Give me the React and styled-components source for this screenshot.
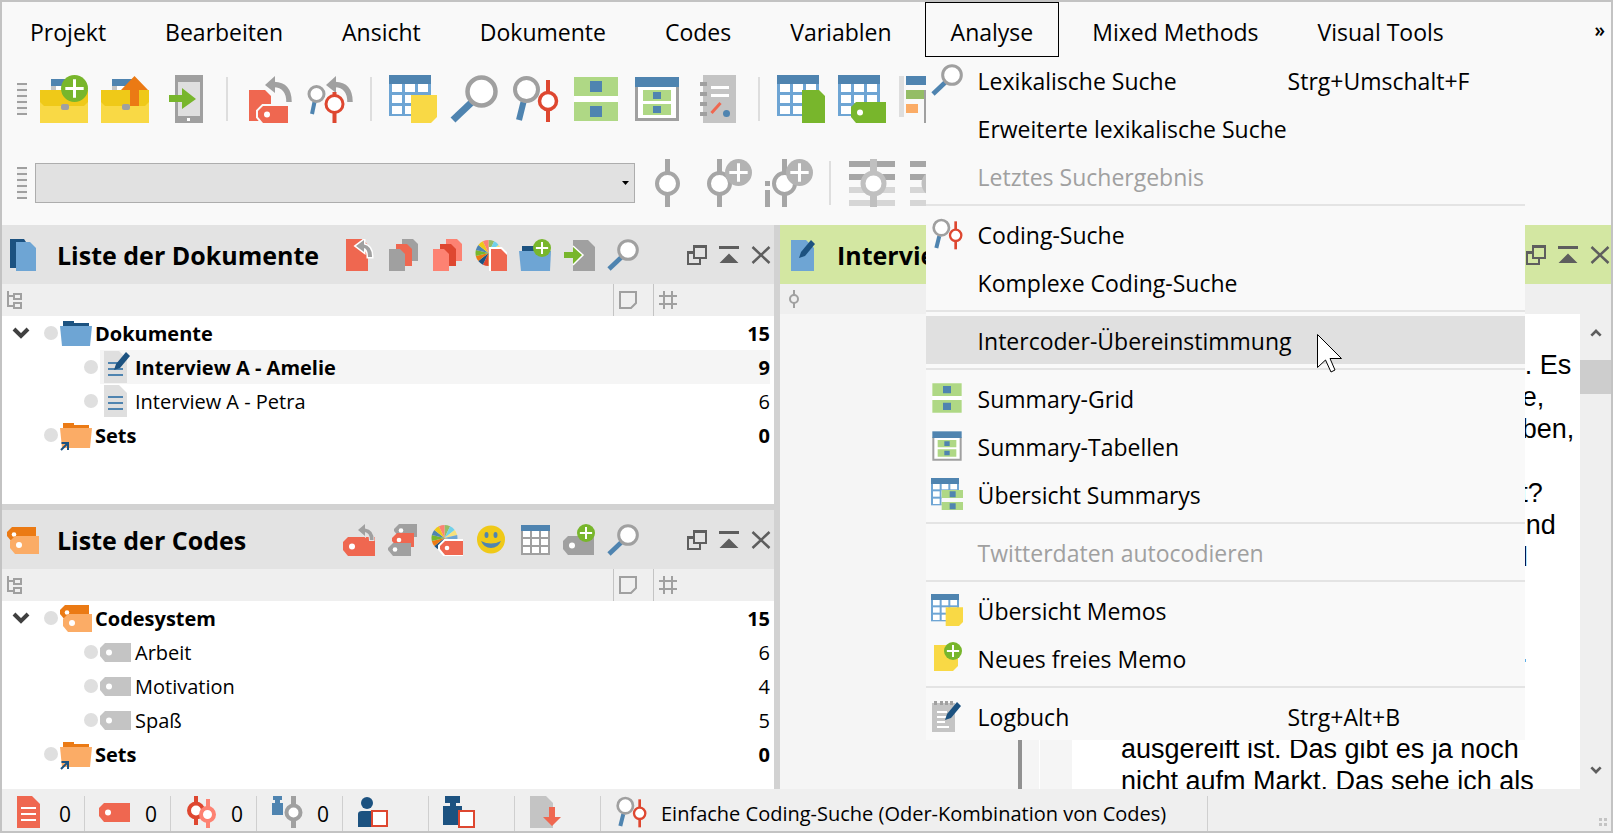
import React from 'react'
import styled, { createGlobalStyle } from 'styled-components'

const c = {
  blue: '#4f84b0',
  lightBlue: '#6ea5d4',
  navy: '#1c5280',
  yellow: '#f9d945',
  darkYellow: '#efc918',
  green: '#78b62c',
  lightGreen: '#afd885',
  orange: '#eb7a14',
  lightOrange: '#fbac66',
  red: '#ef6750',
  darkRed: '#de4730',
  salmon: '#fd8272',
  gray: '#a0a0a0',
  lightGray: '#c4c4c4',
};

const GlobalStyle = createGlobalStyle`
  * { box-sizing: border-box; }
  body {
    margin: 0;
    font-family: "Open Sans", "Noto Sans", sans-serif;
    color: #000;
  }
  button, select { font: inherit; color: inherit; }
`;

/* ---------- layout ---------- */

const Window = styled.div`
  display: flex;
  flex-direction: column;
  height: 100vh;
  border: 2px solid #c3c3c3;
  background-color: #f9f9f9;
  overflow: hidden;
`;

const MenuBar = styled.nav`
  flex: none;
  display: flex;
  gap: 7px;
  height: 55px;
  padding-left: 2px;
`;

const MenuEntry = styled.div`
  position: relative;
`;

const MenuButton = styled.button`
  position: relative;
  z-index: 3;
  height: 55px;
  padding: 4px 25px 0;
  border: 1px solid ${(p) => (p.$open ? '#000' : 'transparent')};
  background-color: #f9f9f9;
  font-size: 23px;
  line-height: 32px;
  white-space: nowrap;
`;

const MoreButton = styled.button`
  margin-left: auto;
  padding: 0 6px;
  border: none;
  background: none;
  font-size: 19px;
  font-weight: 600;
`;

const Dropdown = styled.div`
  position: absolute;
  z-index: 2;
  top: 54px;
  left: 1px;
  width: 599px;
  background-color: #f9f9f9;
`;

const DropdownItem = styled.button`
  position: relative;
  display: grid;
  grid-template-columns: 32px 1fr 237px;
  column-gap: 15px;
  align-items: center;
  width: 100%;
  height: 48px;
  padding: 0 0 0 5px;
  border: none;
  background-color: ${(p) => (p.$active ? '#e0e0e0' : 'transparent')};
  color: ${(p) => (p.disabled ? '#a0a0a0' : '#000')};
  font-size: 23px;
  line-height: 32px;
  text-align: left;
  white-space: nowrap;
`;

const ItemText = styled.span`
  padding-top: 2px;
`;

const Divider = styled.hr`
  height: 2px;
  margin: 4px 0;
  border: none;
  background-color: #e4e4e4;
`;

const Pointer = styled.svg`
  position: absolute;
  top: 18px;
  left: 391px;
  width: 26px;
  height: 39px;
`;

const Toolbar = styled.div`
  flex: none;
  display: flex;
  align-items: center;
  gap: 13px;
  padding: 18px 0 18px 15px;
  overflow: hidden;
`;

const Grip = styled.div`
  flex: none;
  width: 10px;
  height: 32px;
  background: repeating-linear-gradient(#a0a0a0 0 2px, #f1f1f1 2px 6px);
`;

const ToolSeparator = styled.div`
  flex: none;
  width: 2px;
  height: 44px;
  margin: 0 4px 0 3px;
  background-color: #dedede;
`;

const IconButton = styled.button`
  flex: none;
  display: block;
  padding: 0;
  border: none;
  background: none;
  line-height: 0;
`;

const ComboBox = styled.div`
  flex: none;
  display: grid;
  align-items: center;
  width: 600px;
  margin: 0 -5px 0 -5px;

  > * { grid-area: 1 / 1; }
  > svg { justify-self: end; margin-right: 6px; pointer-events: none; }
`;

const Select = styled.select`
  appearance: none;
  width: 100%;
  height: 40px;
  border: 1px solid #adadad;
  border-radius: 0;
  background-color: #e1e1e1;
`;

const Workspace = styled.main`
  flex: 1;
  display: flex;
  gap: 6px;
  min-height: 0;
  background-color: #d2d2d2;
`;

const Column = styled.div`
  flex: 772;
  display: flex;
  flex-direction: column;
  gap: 6px;
  min-width: 0;
`;

const Panel = styled.section`
  flex: ${(p) => p.$grow || 1};
  display: flex;
  flex-direction: column;
  min-width: 0;
  min-height: 0;
  background-color: ${(p) => (p.$document ? '#f5f5f5' : '#fff')};
`;

const PanelHeader = styled.header`
  flex: none;
  display: flex;
  align-items: center;
  height: 59px;
  padding: 0 ${(p) => (p.$active ? 1 : 3)}px 0 ${(p) => (p.$active ? 7 : 5)}px;
  background-color: ${(p) => (p.$active ? '#d3e7a2' : '#e3e3e3')};
`;

const PanelTitle = styled.h2`
  flex: 0 0 286px;
  margin: 0 0 0 18px;
  padding-top: 1px;
  font-size: 25px;
  font-weight: 700;
  line-height: 36px;
  white-space: nowrap;
`;

const PanelTools = styled.div`
  display: flex;
  gap: 12px;
`;

const WindowButtons = styled.div`
  display: flex;
  gap: 12px;
  margin-left: auto;
`;

const TreeTable = styled.table`
  width: 100%;
  table-layout: fixed;
  border-spacing: 0;
`;

const HeadCell = styled.th`
  width: ${(p) => (p.$width ? `${p.$width}px` : 'auto')};
  height: 32px;
  padding: 0 5px;
  border-left: ${(p) => (p.$width ? '1px solid #c4c4c4' : 'none')};
  background-color: #efefef;
  text-align: left;
  line-height: 0;
`;

const TreeRow = styled.tr`
  height: 34px;
  font-size: 20px;
  line-height: 32px;
  font-weight: ${(p) => (p.$bold ? 700 : 400)};
`;

const Cell = styled.td`
  padding: 0;
  background-color: ${(p) => (p.$selected ? '#f5f5f5' : 'transparent')};
`;

const CountCell = styled(Cell)`
  padding-top: 2px;
  border-right: 4px solid #fff;
  text-align: right;
`;

const NameBox = styled.div`
  display: flex;
  align-items: center;
  height: 34px;
  padding-left: ${(p) => 10 + p.$level * 40}px;
`;

const Toggle = styled.button`
  display: flex;
  justify-content: center;
  width: 18px;
  margin-right: 14px;
  padding: 0;
  border: none;
  background: none;
`;

const ToggleSpace = styled.span`
  width: 32px;
`;

const Dot = styled.span`
  width: 14px;
  height: 14px;
  margin-right: 2px;
  border-radius: 50%;
  background-color: #dfdfdf;
`;

const Label = styled.span`
  flex: 1;
  display: flex;
  align-items: center;
  gap: 3px;
  height: 34px;
  background-color: ${(p) => (p.$selected ? '#f5f5f5' : 'transparent')};
  white-space: nowrap;
`;

const CodeStrip = styled.div`
  flex: none;
  height: 30px;
  padding: 6px 9px;
  background-color: #efefef;
  line-height: 0;
`;

const DocumentBody = styled.div`
  flex: 1;
  display: flex;
  min-height: 0;
`;

const CodeMargin = styled.div`
  width: 242px;
  margin-right: 17px;
  border-right: 4px solid #919191;
`;

const ParagraphNumbers = styled.div`
  width: 33px;
  border-left: 1px solid #fff;
`;

const Transcript = styled.article`
  flex: 1;
  min-width: 0;
  padding: 35px 0 0 49px;
  overflow: hidden;
  background-color: #fff;
  font-family: "Liberation Sans", Arial, sans-serif;
  font-size: 27px;
  line-height: 32px;
  white-space: pre;

  p { margin: 0; }
`;

const ScrollBar = styled.div`
  flex: none;
  display: flex;
  flex-direction: column;
  width: 31px;
  background-color: #efefef;
`;

const ScrollButton = styled.button`
  display: flex;
  align-items: center;
  justify-content: center;
  height: 38px;
  margin: ${(p) => (p.$last ? 'auto 0 0' : '0 0 8px')};
  padding: 0;
  border: none;
  background: none;
`;

const Thumb = styled.div`
  height: 34px;
  background-color: #cdcdcd;
`;

const StatusBar = styled.footer`
  flex: none;
  display: flex;
  height: 42px;
  padding-top: 7px;
  background-color: #efefef;
  font-size: 21px;
  line-height: 32px;
`;

const StatusCell = styled.div`
  display: flex;
  gap: 14px;
  width: 83px;
  margin-right: 3px;
  padding-left: 11px;
  border-right: 1px solid #cfcfcf;
`;

const StatusMessage = styled(StatusCell)`
  width: 604px;
  font-size: 20px;
  white-space: nowrap;
`;

const StatusText = styled.span`
  padding-top: 2px;
`;

const SizeGrip = styled.div`
  align-self: flex-end;
  display: grid;
  grid-template-columns: 3px 3px;
  gap: 2px;
  margin: 0 4px 5px auto;

  i { height: 3px; background-color: #c4c4c4; }
`;

/* ---------- icons ---------- */

const Svg = ({ size = 48, box = 48, children }) => (
  <svg width={size} height={size} viewBox={`0 0 ${box} ${box}`} fill="none" aria-hidden="true">
    {children}
  </svg>
);

const Plus = ({ x, y, r = 9, color = c.green }) => (
  <g>
    <circle cx={x} cy={y} r={r} fill={color} />
    <path d={`M${x - r * 0.68} ${y}h${r * 1.36}M${x} ${y - r * 0.68}v${r * 1.36}`} stroke="#fff" strokeWidth={r > 10 ? 3 : 2} />
  </g>
);

// tag with a hole, chamfered on its left side
const Tag = ({ x, y, w, h, color, hole = '#fff', outline }) => (
  <g>
    <path
      d={`M${x + 5} ${y}H${x + w}V${y + h}H${x + 5}L${x} ${y + h - 6}V${y + 5}Z`}
      fill={color}
      stroke={outline}
      strokeWidth={outline ? 4 : 0}
      paintOrder="stroke"
    />
    <circle cx={x + (h > 16 ? 9 : 7)} cy={y + h / 2} r={h > 16 ? 3 : 2.3} fill={hole} />
  </g>
);

const Page = ({ x, y, w, h, color, cut = 6, outline }) => (
  <path
    d={`M${x} ${y}H${x + w - cut}L${x + w} ${y + cut}V${y + h}H${x}Z`}
    fill={color}
    stroke={outline}
    strokeWidth={outline ? 4 : 0}
    paintOrder="stroke"
  />
);

const Grid = () => (
  <g>
    <path d="M0 0h42v41H0z" fill={c.lightBlue} />
    <path d="M0 0h42v9H0z" fill={c.blue} />
    {[9, 20, 31].map((y) => [3, 16, 29].map((x) => (
      <rect key={`${x}-${y}`} x={x} y={y} width="10" height="8" fill="#fff" />
    )))}
  </g>
);

const Briefcase = () => (
  <g>
    <path d="M11 4h22v7H11z" fill={c.blue} />
    <path d="M11 11h5v4h-5z" fill={c.lightGray} />
    <path d="M16 11h14v4H16z" fill="#fff" />
    <path d="M0 15h48v33H0z" fill={c.yellow} />
    <path d="M0 15h48v12l-4 4H4l-4-4z" fill={c.darkYellow} />
    <rect x="21" y="29" width="8" height="6" rx="2" fill={c.gray} />
  </g>
);

const NewProjectIcon = () => <Svg><Briefcase /><Plus x={34.5} y={13.5} r={13.5} /></Svg>;

const OpenProjectIcon = () => (
  <Svg><Briefcase /><path d="M33.500 1L47 15h-9v16h-9V15h-9z" fill={c.orange} /></Svg>
);

const TabletIcon = () => (
  <Svg>
    <path d="M13 0h28v48H13z" fill={c.gray} />
    <path d="M16 7h22v34H16z" fill="#dfdfdf" />
    <path d="M25 43h3v3h-3z" fill="#fff" />
    <path d="M7 20h13v-7l14 11-14 10v-7H7z" fill={c.green} />
  </Svg>
);

const BackArrow = () => (
  <g>
    <path d="M20 10L30 1v17z" fill={c.gray} />
    <path d="M29 9.500Q44 10 44 27" stroke={c.gray} strokeWidth="5.500" />
  </g>
);

const UndoCodingIcon = () => (
  <Svg>
    <path d="M4 15h16l6 6v25H4z" fill={c.red} />
    <Tag x={13} y={31} w={30} h={17} color={c.red} outline="#f9f9f9" />
    <BackArrow />
  </Svg>
);

const RecodeIcon = () => (
  <Svg>
    <path d="M8.500 27L6 39" stroke={c.blue} strokeWidth="4" />
    <circle cx="10.500" cy="19" r="7.500" fill="#fff" stroke={c.gray} strokeWidth="3" />
    <BackArrow />
    <path d="M28.500 17v4M28.500 38v10" stroke={c.darkRed} strokeWidth="4" />
    <circle cx="28.500" cy="29" r="8.500" fill="#fff" stroke={c.darkRed} strokeWidth="3" />
  </Svg>
);

const TableMemoIcon = ({ size }) => (
  <Svg size={size}><Grid /><path d="M22 20h26v22l-6 6H22z" fill={c.yellow} /></Svg>
);

const LensIcon = ({ size }) => (
  <Svg size={size}>
    <path d="M22 27L3 45" stroke={c.blue} strokeWidth="7" />
    <circle cx="31.500" cy="16.500" r="14" fill="#fff" stroke={c.gray} strokeWidth="4.500" />
  </Svg>
);

const CodingSearchIcon = ({ size }) => (
  <Svg size={size}>
    <path d="M12.500 27L8 45" stroke={c.blue} strokeWidth="6" />
    <circle cx="15.500" cy="14.500" r="11.500" fill="#fff" stroke={c.gray} strokeWidth="4" />
    <path d="M37 5v42" stroke={c.darkRed} strokeWidth="4" />
    <circle cx="37" cy="26" r="8.500" fill="#fff" stroke={c.darkRed} strokeWidth="3.500" />
  </Svg>
);

const SummaryGridIcon = ({ size }) => (
  <Svg size={size}>
    <path d="M2 2h44v44H2z" fill="#fff" />
    <path d="M2 2h44v19H2zM2 27h44v19H2z" fill={c.lightGreen} />
    <path d="M18 6h12v11H18zM18 31h12v11H18z" fill={c.blue} />
  </Svg>
);

const SummaryTableIcon = ({ size }) => (
  <Svg size={size}>
    <path d="M3.500 11v33.500h41V11" fill="#fff" stroke={c.gray} strokeWidth="3" />
    <path d="M2 2h44v10H2z" fill={c.blue} />
    <path d="M10 15h28v11H10zM10 29h28v11H10z" fill={c.lightGreen} />
    <path d="M20 17h8v7h-8zM20 31h8v7h-8z" fill={c.blue} />
  </Svg>
);

const TableSummaryIcon = ({ size }) => (
  <Svg size={size}>
    <Grid />
    <path d="M16 18h32v30H16z" fill="#f9f9f9" />
    <path d="M16 18h32v12H16zM16 36h32v12H16z" fill={c.lightGreen} />
    <path d="M28 20h9v9h-9zM28 38h9v9h-9z" fill={c.blue} />
  </Svg>
);

const NotebookIcon = () => (
  <Svg>
    <path d="M9 0h33v48H9z" fill={c.lightGray} />
    <path d="M6 7h7v4H6zM6 17h7v4H6zM6 27h7v4H6zM6 37h7v4H6z" fill={c.gray} />
    <path d="M17 12.500h18M17 20.500h18" stroke="#fff" strokeWidth="3" />
    <path d="M17.500 38l9-10" stroke={c.red} strokeWidth="3" />
    <circle cx="32.500" cy="38.500" r="3.500" fill={c.blue} />
  </Svg>
);

const TableDocIcon = () => (
  <Svg><Grid /><Page x={25} y={15} w={23} h={33} color={c.green} /></Svg>
);

const TableTagIcon = () => (
  <Svg><Grid /><Tag x={13} y={27} w={35} h={21} color={c.green} /></Svg>
);

const BarsIcon = () => (
  <Svg>
    <path d="M0 1h5v41H0z" fill="#dedede" />
    <path d="M7 1h40v9H7z" fill={c.blue} />
    <path d="M7 15h18v9H7z" fill="#94bd66" />
    <path d="M7 29h12v9H7z" fill={c.lightOrange} />
    <path d="M25 15h4v33h-4z" fill={c.gray} />
  </Svg>
);

const CodeNode = ({ x }) => (
  <g>
    <path d={`M${x} 0v48`} stroke="#a6a6a6" strokeWidth="5" />
    <circle cx={x} cy="24.500" r="10.500" fill="#fff" stroke="#a6a6a6" strokeWidth="4" />
  </g>
);

const CodeIcon = () => <Svg><CodeNode x={24.5} /></Svg>;
const CodeNewIcon = () => (
  <Svg><CodeNode x={15.5} /><Plus x={34.5} y={13.5} r={13.5} color="#b3b3b3" /></Svg>
);
const CodeInVivoIcon = () => (
  <Svg>
    <path d="M0 22h5v5H0zM0 31h5v17H0z" fill="#a6a6a6" />
    <CodeNode x={19.5} />
    <Plus x={34.5} y={13.5} r={13.5} color="#b3b3b3" />
  </Svg>
);
const CodeLinesIcon = () => (
  <Svg>
    <path d="M1 2h46v6H1zM1 15h46v6H1z" fill="#a6a6a6" />
    <path d="M1 28h46v6H1zM1 41h46v6H1z" fill="#d6d6d6" />
    <path d="M25.500 0v48" stroke="#c0c0c0" strokeWidth="7" />
    <circle cx="25.500" cy="24.500" r="10.500" fill="#fff" stroke="#c0c0c0" strokeWidth="5" />
  </Svg>
);

const Small = ({ children }) => <Svg size={32} box={32}>{children}</Svg>;

const DocumentsIcon = () => (
  <Small>
    <path d="M3 0h14l2 3v26H3z" fill={c.navy} />
    <Page x={9} y={3} w={20} h={29} color={c.lightBlue} />
  </Small>
);

const SmallBack = ({ x, y }) => (
  <g transform={`translate(${x} ${y})`}>
    <path d="M0 6L8 0v4.500Q16 6 16 17h-4Q12 9 8 8v4z" fill={c.gray} stroke="#fff" strokeWidth="3" paintOrder="stroke" />
  </g>
);

const UndoDocIcon = () => (
  <Small><path d="M3 0h16l6 6v26H3z" fill={c.red} /><SmallBack x={13} y={1} /></Small>
);

const PagesIcon = ({ back, middle }) => (
  <Small>
    <Page x={15} y={0} w={16} h={22} color={back} cut={5} />
    <Page x={9} y={5} w={16} h={22} color={middle} cut={5} />
    <Page x={2} y={10} w={16} h={22} color={back} cut={5} />
  </Small>
);

const wheelColors = ['#94bd66', '#70d1ea', '#f7e17c', c.lightBlue, c.gray, c.darkYellow, c.darkYellow, c.darkRed, c.navy, c.orange, c.green, c.blue, c.darkYellow, c.salmon];

const Wheel = () => (
  <g>
    {wheelColors.map((color, i) => {
      const step = (Math.PI * 2) / wheelColors.length;
      const at = (n) => `${13.5 + 13 * Math.sin(n * step)} ${14 - 13 * Math.cos(n * step)}`;
      return <path key={i} d={`M13.500 14L${at(i)}A13 13 0 0 1 ${at(i + 1)}Z`} fill={color} />;
    })}
  </g>
);

const WheelDocIcon = () => (
  <Small><Wheel /><Page x={16} y={10} w={16} h={22} color={c.red} outline="#fff" /></Small>
);

const WheelTagIcon = () => (
  <Small><Wheel /><Tag x={9} y={17} w={23} h={14} color={c.red} outline="#fff" /></Small>
);

const FolderPlusIcon = () => (
  <Small>
    <path d="M3 7h14v6H3z" fill={c.navy} />
    <path d="M0 12h32l-1 20H2z" fill={c.lightBlue} />
    <Plus x={23} y={9} />
  </Small>
);

const ImportDocIcon = () => (
  <Small>
    <Page x={10} y={1} w={22} h={31} color={c.gray} cut={7} />
    <path d="M1 13h9V7l10 9-10 10v-7H1z" fill={c.green} />
    <path d="M10 7l10 9-10 10" stroke="#fff" strokeWidth="1.500" />
  </Small>
);

const TagsIcon = () => (
  <Small>
    <Tag x={0} y={3} w={29} h={15} color={c.orange} />
    <Tag x={3} y={12} w={29} h={18} color={c.lightOrange} />
  </Small>
);

const UndoTagIcon = () => (
  <Small>
    <Tag x={0} y={13} w={32} h={19} color={c.red} />
    <path d="M15 6l7-6v4.500Q31 6 30.500 16h-3.500Q27 9 22 8v4z" fill={c.gray} stroke="#e3e3e3" strokeWidth="2" paintOrder="stroke" />
  </Small>
);

const TagStackIcon = () => (
  <Small>
    <Tag x={7} y={0} w={23} h={13} color={c.gray} />
    <Tag x={5} y={9} w={22} h={14} color={c.red} />
    <Tag x={1} y={19} w={23} h={13} color={c.gray} />
  </Small>
);

const SmileyIcon = () => (
  <Small>
    <circle cx="16" cy="15.500" r="14" fill={c.darkYellow} />
    <ellipse cx="11.500" cy="11" rx="2" ry="3" fill={c.blue} />
    <ellipse cx="20.500" cy="11" rx="2" ry="3" fill={c.blue} />
    <path d="M6 17q10 5 20 0-3 7-10 7T6 17z" fill={c.blue} />
  </Small>
);

const TableIcon = () => (
  <Small>
    <path d="M2 1h29v30H2z" fill={c.gray} />
    <path d="M2 1h29v6H2z" fill={c.blue} />
    {[7, 15, 23].map((y) => [4, 13, 22].map((x) => (
      <rect key={`${x}-${y}`} x={x} y={y} width="7" height="6" fill="#fff" />
    )))}
  </Small>
);

const TagPlusIcon = () => (
  <Small><Tag x={0} y={12} w={31} h={19} color={c.gray} /><Plus x={23} y={9} /></Small>
);

const Pen = ({ x, y }) => (
  <path d={`M${x} ${y}l2-6 10-12 4 4-10 12z`} fill={c.navy} />
);

const EditDocIcon = () => (
  <Small>
    <Page x={4} y={1} w={23} h={31} color={c.lightBlue} cut={8} />
    <Pen x={12} y={19} />
  </Small>
);

const TextDoc = ({ color, lines }) => (
  <g>
    <Page x={4} y={0} w={23} h={32} color={color} cut={8} />
    <path d="M8 12h15M8 18h15M8 24h15" stroke={lines} strokeWidth="2" />
  </g>
);

const TextDocIcon = () => <Small><TextDoc color="#dfdfdf" lines={c.blue} /></Small>;
const ActiveDocIcon = () => (
  <Small><TextDoc color="#dfdfdf" lines={c.blue} /><Pen x={14} y={19} /></Small>
);

const FolderIcon = ({ color, tab, linked }) => (
  <Small>
    <path d="M3 4h11v2h15v4H3z" fill={tab} />
    <path d="M0 9h32l-2 20H2z" fill={color} />
    {linked && <path d="M1 31l7-7M1.500 24H8v7" stroke={c.navy} strokeWidth="2" />}
  </Small>
);

const TagIcon = ({ color }) => <Small><Tag x={0} y={7} w={31} h={19} color={color} /></Small>;

const DoubleCodeIcon = () => (
  <Small>
    <path d="M11 0v29" stroke={c.darkRed} strokeWidth="4" />
    <circle cx="11" cy="14.500" r="7" fill="#fff" stroke={c.darkRed} strokeWidth="4" />
    <path d="M23 3v29" stroke={c.salmon} strokeWidth="4" />
    <circle cx="22.500" cy="18.500" r="6.500" fill="#fff" stroke={c.salmon} strokeWidth="4" />
  </Small>
);

const WeightCodeIcon = () => (
  <Small>
    <path d="M2 0h9v4H9v3h3v12H1V7h3V4H2z" fill={c.blue} />
    <path d="M22.500 0v32" stroke={c.gray} strokeWidth="5" />
    <circle cx="22.500" cy="16.500" r="7" fill="#fff" stroke={c.gray} strokeWidth="4" />
  </Small>
);

const PersonIcon = () => (
  <Small>
    <circle cx="10" cy="7" r="6" fill={c.navy} />
    <path d="M1 31V18q0-3 4-3h12v16z" fill={c.navy} />
    <path d="M15 15h15v15H15z" fill="#fff" stroke={c.darkRed} strokeWidth="2" />
  </Small>
);

const WeightIcon = () => (
  <Small>
    <path d="M2 0h15v7h-4v3h6v19H0V10h7V7H2z" fill={c.navy} />
    <path d="M16 15h15v16H16z" fill="#fff" stroke={c.darkRed} strokeWidth="2" />
  </Small>
);

const DocDownIcon = () => (
  <Small>
    <Page x={1} y={0} w={23} h={32} color={c.lightGray} cut={7} />
    <path d="M20 11h6v10h6l-9 9-9-9h6z" fill={c.red} />
  </Small>
);

const NewMemoIcon = () => (
  <Small>
    <path d="M3 3h24v21l-5 5H3z" fill={c.yellow} />
    <Plus x={22} y={9} />
  </Small>
);

const LogbookIcon = () => (
  <Small>
    <path d="M1 3h23v29H1z" fill={c.lightGray} />
    <path d="M3 1h3v4H3zM9 1h3v4H9zM14 1h3v4h-3zM19 1h3v4h-3z" fill={c.gray} />
    <path d="M6 12h10M6 17h12M6 22h8M6 27h12" stroke="#fff" strokeWidth="2" />
    <Pen x={14} y={20} />
  </Small>
);

const RestoreIcon = () => (
  <Svg size={20} box={20}>
    <path d="M6 7H1v12h12v-5" stroke="#5e5e5e" strokeWidth="2" />
    <path d="M7 1h12v12H7zM7 2h12M1 8h5" stroke="#5e5e5e" strokeWidth="2" />
  </Svg>
);

const CollapseIcon = () => (
  <Svg size={20} box={20}>
    <path d="M0 1h20v3H0zM.500 18L10 8.500l9.500 9.500z" fill="#5e5e5e" />
  </Svg>
);

const CloseIcon = () => (
  <Svg size={20} box={20}><path d="M1.500 2l17 16M18.500 2l-17 16" stroke="#5e5e5e" strokeWidth="2.500" /></Svg>
);

const HierarchyIcon = () => (
  <Svg size={18} box={18}>
    <path d="M1 0v15h6M1 5h6M7 3h7v5H7zM7 12h7v5H7z" stroke={c.gray} strokeWidth="2" />
  </Svg>
);

const MemoColumnIcon = () => (
  <Svg size={18} box={18}><path d="M1 1h16v11l-5 5H1z" stroke={c.gray} strokeWidth="2" /></Svg>
);

const HashIcon = () => (
  <Svg size={18} box={18}>
    <path d="M5 0v18M13 0v18M0 5h18M0 13h18" stroke={c.gray} strokeWidth="2" />
  </Svg>
);

const CodeStripIcon = () => (
  <svg width="10" height="18" viewBox="0 0 10 18" fill="none" aria-hidden="true">
    <path d="M5 0v5M5 13v5" stroke={c.gray} strokeWidth="2" />
    <circle cx="5" cy="9" r="4" stroke={c.gray} strokeWidth="2" />
  </svg>
);

const Chevron = ({ up, width = 18, color = '#404040' }) => (
  <svg width={width} height="12" viewBox="0 0 18 12" fill="none" aria-hidden="true">
    <path d={up ? 'M2 10l7-7 7 7' : 'M2 2l7 7 7-7'} stroke={color} strokeWidth="4" />
  </svg>
);

/* ---------- data ---------- */

const menuNames = ['Projekt', 'Bearbeiten', 'Ansicht', 'Dokumente', 'Codes', 'Variablen', 'Analyse', 'Mixed Methods', 'Visual Tools'];

const analysisMenu = [
  { label: 'Lexikalische Suche', icon: <LensIcon size={32} />, keys: 'Strg+Umschalt+F' },
  { label: 'Erweiterte lexikalische Suche' },
  { label: 'Letztes Suchergebnis', disabled: true },
  null,
  { label: 'Coding-Suche', icon: <CodingSearchIcon size={32} /> },
  { label: 'Komplexe Coding-Suche' },
  null,
  { label: 'Intercoder-Übereinstimmung', active: true },
  null,
  { label: 'Summary-Grid', icon: <SummaryGridIcon size={32} /> },
  { label: 'Summary-Tabellen', icon: <SummaryTableIcon size={32} /> },
  { label: 'Übersicht Summarys', icon: <TableSummaryIcon size={32} /> },
  null,
  { label: 'Twitterdaten autocodieren', disabled: true },
  null,
  { label: 'Übersicht Memos', icon: <TableMemoIcon size={32} /> },
  { label: 'Neues freies Memo', icon: <NewMemoIcon /> },
  null,
  { label: 'Logbuch', icon: <LogbookIcon />, keys: 'Strg+Alt+B' },
];

const mainTools = [
  ['Neues Projekt', NewProjectIcon],
  ['Projekt öffnen', OpenProjectIcon],
  ['App-Projekt importieren', TabletIcon],
  null,
  ['Codierung rückgängig', UndoCodingIcon],
  ['Suche zurücksetzen', RecodeIcon],
  null,
  ['Übersicht Memos', TableMemoIcon],
  ['Lexikalische Suche', LensIcon],
  ['Coding-Suche', CodingSearchIcon],
  ['Summary-Grid', SummaryGridIcon],
  ['Summary-Tabellen', SummaryTableIcon],
  ['Logbuch', NotebookIcon],
  null,
  ['Dokumentvariablen', TableDocIcon],
  ['Codevariablen', TableTagIcon],
  ['Diagramm', BarsIcon],
];

const codeTools = [
  ['Codieren', CodeIcon],
  ['Neuer Code', CodeNewIcon],
  ['In-vivo-Code', CodeInVivoIcon],
  null,
  ['Codierstreifen', CodeLinesIcon],
  ['Codierstreifen wählen', CodeLinesIcon],
];

const documentTools = [
  ['Aktivierung zurücksetzen', <UndoDocIcon />],
  ['Aktivierung umkehren', <PagesIcon back={c.gray} middle={c.red} />],
  ['Alle aktivieren', <PagesIcon back={c.salmon} middle={c.darkRed} />],
  ['Nach Farbe aktivieren', <WheelDocIcon />],
  ['Neue Dokumentgruppe', <FolderPlusIcon />],
  ['Dokument importieren', <ImportDocIcon />],
  ['Suchen', <LensIcon size={32} />],
];

const codeListTools = [
  ['Aktivierung zurücksetzen', <UndoTagIcon />],
  ['Aktivierung umkehren', <TagStackIcon />],
  ['Nach Farbe aktivieren', <WheelTagIcon />],
  ['Emoticode', <SmileyIcon />],
  ['Übersicht Codes', <TableIcon />],
  ['Neuer Code', <TagPlusIcon />],
  ['Suchen', <LensIcon size={32} />],
];

const setsFolder = <FolderIcon color={c.lightOrange} tab={c.orange} linked />;

const documentRows = [
  { label: 'Dokumente', count: 15, bold: true, open: true, icon: <FolderIcon color={c.lightBlue} tab={c.navy} /> },
  { label: 'Interview A - Amelie', count: 9, level: 1, bold: true, selected: true, icon: <ActiveDocIcon /> },
  { label: 'Interview A - Petra', count: 6, level: 1, icon: <TextDocIcon /> },
  { label: 'Sets', count: 0, bold: true, icon: setsFolder },
];

const codeRows = [
  { label: 'Codesystem', count: 15, bold: true, open: true, icon: <TagsIcon /> },
  { label: 'Arbeit', count: 6, level: 1, icon: <TagIcon color={c.lightGray} /> },
  { label: 'Motivation', count: 4, level: 1, icon: <TagIcon color={c.lightGray} /> },
  { label: 'Spaß', count: 5, level: 1, icon: <TagIcon color={c.lightGray} /> },
  { label: 'Sets', count: 0, bold: true, icon: setsFolder },
];

const transcript = [
  'Und das sind die, die jetzt da sind. Es',
  'gibt natürlich materiellen Probleme,',
  'dass wir mal Energieprobleme haben,',
  'wie wir unsere',
  'planen Versorgung für die Zukunft?',
  'Wo geht das mal hin? Inwiefern sind',
  'wenn diese Sachen sind alle. Und',
  'die Alternativen sprich diese',
  'Wind- und Solarenergie',
  'wegen meiner Vor- und Nachteile.',
  'und Technik ist noch nicht soweit,',
  'dass das alles wirklich schon so',
  'ausgereift ist. Das gibt es ja noch',
  'nicht aufm Markt. Das sehe ich als',
];

const statusItems = [
  [<Small><TextDoc color={c.red} lines="#fff" /></Small>, '0'],
  [<TagIcon color={c.red} />, '0'],
  [<DoubleCodeIcon />, '0'],
  [<WeightCodeIcon />, '0'],
  [<PersonIcon />],
  [<WeightIcon />],
  [<DocDownIcon />],
];

/* ---------- components ---------- */

const ToolButtons = ({ tools }) => tools.map((tool, i) => {
  if (!tool) return <ToolSeparator key={i} />;
  const [name, Icon] = tool;
  return <IconButton key={i} aria-label={name}><Icon /></IconButton>;
});

const AnalysisMenu = () => (
  <Dropdown role="menu">
    {analysisMenu.map((item, i) => item ? (
      <DropdownItem key={i} role="menuitem" disabled={item.disabled} $active={item.active}>
        {item.icon || <span />}
        <ItemText>{item.label}</ItemText>
        {item.keys && <ItemText>{item.keys}</ItemText>}
        {item.active && (
          <Pointer viewBox="0 0 26 39" aria-hidden="true">
            <path d="M.500 .500v33l8-7.500 5.500 12 4-2-5-11.500h11.500z" fill="#fff" stroke="#000" />
          </Pointer>
        )}
      </DropdownItem>
    ) : <Divider key={i} />)}
  </Dropdown>
);

const PanelControls = () => (
  <WindowButtons>
    <IconButton aria-label="Fenster lösen"><RestoreIcon /></IconButton>
    <IconButton aria-label="Einklappen"><CollapseIcon /></IconButton>
    <IconButton aria-label="Schließen"><CloseIcon /></IconButton>
  </WindowButtons>
);

const TreePanel = ({ title, icon, tools, rows }) => (
  <Panel>
    <PanelHeader>
      {icon}
      <PanelTitle>{title}</PanelTitle>
      <PanelTools>
        {tools.map(([name, toolIcon], i) => (
          <IconButton key={i} aria-label={name}>{toolIcon}</IconButton>
        ))}
      </PanelTools>
      <PanelControls />
    </PanelHeader>
    <TreeTable>
      <thead>
        <tr>
          <HeadCell aria-label="Name"><HierarchyIcon /></HeadCell>
          <HeadCell $width={40} aria-label="Memo"><MemoColumnIcon /></HeadCell>
          <HeadCell $width={121} aria-label="Anzahl"><HashIcon /></HeadCell>
        </tr>
      </thead>
      <tbody>
        {rows.map((row) => (
          <TreeRow key={row.label} $bold={row.bold}>
            <Cell>
              <NameBox $level={row.level || 0}>
                {row.open ? <Toggle aria-label="Zuklappen"><Chevron /></Toggle> : <ToggleSpace />}
                <Dot />
                <Label $selected={row.selected}>
                  {row.icon}
                  <ItemText>{row.label}</ItemText>
                </Label>
              </NameBox>
            </Cell>
            <Cell $selected={row.selected} />
            <CountCell $selected={row.selected}>{row.count}</CountCell>
          </TreeRow>
        ))}
      </tbody>
    </TreeTable>
  </Panel>
);

const DocumentPanel = () => (
  <Panel $grow={831} $document>
    <PanelHeader $active>
      <EditDocIcon />
      <PanelTitle>Interview A - Amelie</PanelTitle>
      <PanelControls />
    </PanelHeader>
    <CodeStrip><CodeStripIcon /></CodeStrip>
    <DocumentBody>
      <CodeMargin />
      <ParagraphNumbers />
      <Transcript>
        {transcript.map((line) => <p key={line}>{line}</p>)}
      </Transcript>
      <ScrollBar>
        <ScrollButton aria-label="Nach oben"><Chevron up width={12} color="#5e5e5e" /></ScrollButton>
        <Thumb />
        <ScrollButton $last aria-label="Nach unten"><Chevron width={12} color="#5e5e5e" /></ScrollButton>
      </ScrollBar>
    </DocumentBody>
  </Panel>
);

const App = () => {
  return (
    <Window>
      <GlobalStyle />
      <MenuBar>
        {menuNames.map((name) => (
          <MenuEntry key={name}>
            <MenuButton $open={name === 'Analyse'}>{name}</MenuButton>
            {name === 'Analyse' && <AnalysisMenu />}
          </MenuEntry>
        ))}
        <MoreButton aria-label="Weitere Menüs">»</MoreButton>
      </MenuBar>
      <Toolbar>
        <Grip />
        <ToolButtons tools={mainTools} />
      </Toolbar>
      <Toolbar>
        <Grip />
        <ComboBox>
          <Select aria-label="Code auswählen" defaultValue=""><option value=""></option></Select>
          <svg width="7" height="4" viewBox="0 0 7 4"><path d="M0 0h7L3.500 4z" /></svg>
        </ComboBox>
        <ToolButtons tools={codeTools} />
      </Toolbar>
      <Workspace>
        <Column>
          <TreePanel title="Liste der Dokumente" icon={<DocumentsIcon />} tools={documentTools} rows={documentRows} />
          <TreePanel title="Liste der Codes" icon={<TagsIcon />} tools={codeListTools} rows={codeRows} />
        </Column>
        <DocumentPanel />
      </Workspace>
      <StatusBar>
        {statusItems.map(([icon, value], i) => (
          <StatusCell key={i}>{icon}<StatusText>{value}</StatusText></StatusCell>
        ))}
        <StatusMessage>
          <CodingSearchIcon size={32} />
          <StatusText>Einfache Coding-Suche (Oder-Kombination von Codes)</StatusText>
        </StatusMessage>
        <SizeGrip><i /><i /><i /><i /></SizeGrip>
      </StatusBar>
    </Window>
  )
}

export default App
